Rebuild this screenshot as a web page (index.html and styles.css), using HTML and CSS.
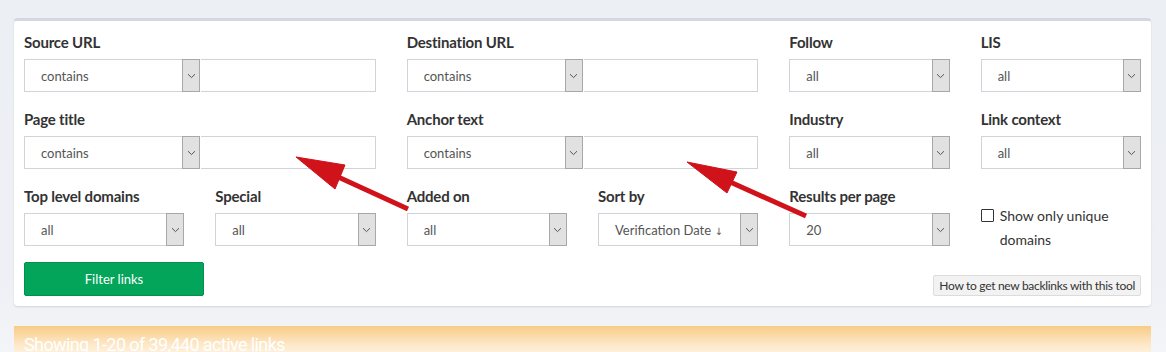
FILE: index.html
```html
<!DOCTYPE html>
<html>
<head>
<meta charset="utf-8">
<link rel="stylesheet" href="styles.css">
</head>
<body>
<div class="page">
  <div class="card">
    <div class="grid">
      <div class="field span2">
        <div class="label">Source URL</div>
        <div class="combo">
          <div class="select sel-fixed"><span class="val">contains</span><span class="caret"><svg width="9" height="6" viewBox="0 0 9 6"><path d="M1 1.2 L4.5 4.6 L8 1.2" fill="none" stroke="#555" stroke-width="1"/></svg></span></div>
          <div class="input"></div>
        </div>
      </div>
      <div class="field span2">
        <div class="label">Destination URL</div>
        <div class="combo">
          <div class="select sel-fixed"><span class="val">contains</span><span class="caret"><svg width="9" height="6" viewBox="0 0 9 6"><path d="M1 1.2 L4.5 4.6 L8 1.2" fill="none" stroke="#555" stroke-width="1"/></svg></span></div>
          <div class="input"></div>
        </div>
      </div>
      <div class="field">
        <div class="label">Follow</div>
        <div class="select"><span class="val">all</span><span class="caret"><svg width="9" height="6" viewBox="0 0 9 6"><path d="M1 1.2 L4.5 4.6 L8 1.2" fill="none" stroke="#555" stroke-width="1"/></svg></span></div>
      </div>
      <div class="field">
        <div class="label">LIS</div>
        <div class="select"><span class="val">all</span><span class="caret"><svg width="9" height="6" viewBox="0 0 9 6"><path d="M1 1.2 L4.5 4.6 L8 1.2" fill="none" stroke="#555" stroke-width="1"/></svg></span></div>
      </div>

      <div class="field span2">
        <div class="label">Page title</div>
        <div class="combo">
          <div class="select sel-fixed"><span class="val">contains</span><span class="caret"><svg width="9" height="6" viewBox="0 0 9 6"><path d="M1 1.2 L4.5 4.6 L8 1.2" fill="none" stroke="#555" stroke-width="1"/></svg></span></div>
          <div class="input"></div>
        </div>
      </div>
      <div class="field span2">
        <div class="label">Anchor text</div>
        <div class="combo">
          <div class="select sel-fixed"><span class="val">contains</span><span class="caret"><svg width="9" height="6" viewBox="0 0 9 6"><path d="M1 1.2 L4.5 4.6 L8 1.2" fill="none" stroke="#555" stroke-width="1"/></svg></span></div>
          <div class="input"></div>
        </div>
      </div>
      <div class="field">
        <div class="label">Industry</div>
        <div class="select"><span class="val">all</span><span class="caret"><svg width="9" height="6" viewBox="0 0 9 6"><path d="M1 1.2 L4.5 4.6 L8 1.2" fill="none" stroke="#555" stroke-width="1"/></svg></span></div>
      </div>
      <div class="field">
        <div class="label">Link context</div>
        <div class="select"><span class="val">all</span><span class="caret"><svg width="9" height="6" viewBox="0 0 9 6"><path d="M1 1.2 L4.5 4.6 L8 1.2" fill="none" stroke="#555" stroke-width="1"/></svg></span></div>
      </div>

      <div class="field">
        <div class="label">Top level domains</div>
        <div class="select"><span class="val">all</span><span class="caret"><svg width="9" height="6" viewBox="0 0 9 6"><path d="M1 1.2 L4.5 4.6 L8 1.2" fill="none" stroke="#555" stroke-width="1"/></svg></span></div>
      </div>
      <div class="field">
        <div class="label">Special</div>
        <div class="select"><span class="val">all</span><span class="caret"><svg width="9" height="6" viewBox="0 0 9 6"><path d="M1 1.2 L4.5 4.6 L8 1.2" fill="none" stroke="#555" stroke-width="1"/></svg></span></div>
      </div>
      <div class="field">
        <div class="label">Added on</div>
        <div class="select"><span class="val">all</span><span class="caret"><svg width="9" height="6" viewBox="0 0 9 6"><path d="M1 1.2 L4.5 4.6 L8 1.2" fill="none" stroke="#555" stroke-width="1"/></svg></span></div>
      </div>
      <div class="field">
        <div class="label">Sort by</div>
        <div class="select"><span class="val">Verification Date <span class="down">↓</span></span><span class="caret"><svg width="9" height="6" viewBox="0 0 9 6"><path d="M1 1.2 L4.5 4.6 L8 1.2" fill="none" stroke="#555" stroke-width="1"/></svg></span></div>
      </div>
      <div class="field">
        <div class="label">Results per page</div>
        <div class="select"><span class="val">20</span><span class="caret"><svg width="9" height="6" viewBox="0 0 9 6"><path d="M1 1.2 L4.5 4.6 L8 1.2" fill="none" stroke="#555" stroke-width="1"/></svg></span></div>
      </div>
      <div class="field check-field">
        <label class="check"><span class="box"></span><span class="check-text">Show only unique domains</span></label>
      </div>
    </div>
    <div class="actions">
      <button class="btn-filter">Filter links</button>
      <button class="btn-help">How to get new backlinks with this tool</button>
    </div>
  </div>
  <div class="results-bar">Showing 1-20 of 39,440 active links</div>
</div>
<svg class="arrows" width="1166" height="352" viewBox="0 0 1166 352">
  <g fill="#d0121b" stroke="#d0121b">
    <line x1="336" y1="176" x2="408" y2="209" stroke-width="5"/>
    <polygon points="296,157 345,165 335,189" stroke-width="1"/>
    <line x1="728" y1="181" x2="806" y2="216" stroke-width="5"/>
    <polygon points="687,162 737,172 727,193" stroke-width="1"/>
  </g>
</svg>
</body>
</html>
```

FILE: styles.css
```css
* { box-sizing: border-box; }
html, body { margin: 0; padding: 0; }
body {
  width: 1166px;
  height: 352px;
  overflow: hidden;
  background: linear-gradient(#eceff4 0%, #eef0f5 80%, #f4f5f8 100%);
  font-family: "Lato", "Liberation Sans", sans-serif;
  color: #333;
  position: relative;
}
.page {
  padding: 18px 15px 0 14px;
}
.card {
  background: #fff;
  border-top: 3px solid #d3d7df;
  border-radius: 4px;
  box-shadow: 0 1px 2px rgba(0,0,0,0.12);
  padding: 11px 10px 10px 10px;
}
.grid {
  display: grid;
  grid-template-columns: repeat(6, 1fr);
  column-gap: 31px;
  row-gap: 17px;
}
.span2 { grid-column: span 2; }
.label {
  font-size: 15px;
  font-weight: 700;
  line-height: 20px;
  color: #333;
  margin-bottom: 7px;
  letter-spacing: -0.2px;
}
.combo { display: flex; }
.select {
  height: 33px;
  border: 1px solid #cfd3da;
  background: #fff;
  display: flex;
  align-items: center;
  position: relative;
}
.sel-fixed { flex: 0 0 176px; }
.val {
  flex: 1;
  padding-left: 16px;
  font-size: 13px;
  color: #555;
  white-space: nowrap;
}
.down {
  font-family: "DejaVu Sans", sans-serif;
  font-size: 10px;
  color: #555;
}
.caret {
  width: 18px;
  align-self: stretch;
  margin: -1px -1px -1px 0;
  background: #e1e1e1;
  border: 1px solid #a8a8a8;
  display: flex;
  align-items: center;
  justify-content: center;
}
.caret svg { display: block; }
.input {
  flex: 1;
  height: 33px;
  border: 1px solid #cfd3da;
  border-left: none;
  margin-left: 1px;
  background: #fff;
}
.check-field {
  height: 60px;
  padding-top: 18px;
}
.check {
  display: flex;
  align-items: flex-start;
  font-size: 14px;
  line-height: 24px;
  color: #333;
}
.box {
  flex: 0 0 13px;
  width: 13px;
  height: 13px;
  border: 1px solid #333;
  border-radius: 1px;
  margin: 5px 6px 0 0;
  background: #fff;
}
.actions {
  display: flex;
  justify-content: space-between;
  align-items: flex-end;
  margin-top: 16px;
}
.btn-filter {
  width: 180px;
  height: 34px;
  background: #02a55a;
  border: 1px solid #02904e;
  border-radius: 2px;
  color: #fff;
  font-family: inherit;
  font-size: 13px;
  padding: 0;
}
.btn-help {
  height: 21px;
  padding: 0 5px;
  background: #f2f2f2;
  border: 1px solid #dcdcdc;
  border-radius: 2px;
  color: #333;
  font-family: inherit;
  font-size: 12px;
  letter-spacing: -0.3px;
}
.results-bar {
  margin-top: 20px;
  height: 40px;
  background: linear-gradient(#f8cc86 0%, #fde7c6 45%, #ffffff 100%);
  color: #fff;
  font-size: 18px;
  padding: 8px 10px;
  letter-spacing: -0.6px;
  font-family: "Roboto", "Liberation Sans", sans-serif;
}
.arrows {
  position: absolute;
  left: 0;
  top: 0;
  pointer-events: none;
}
```
